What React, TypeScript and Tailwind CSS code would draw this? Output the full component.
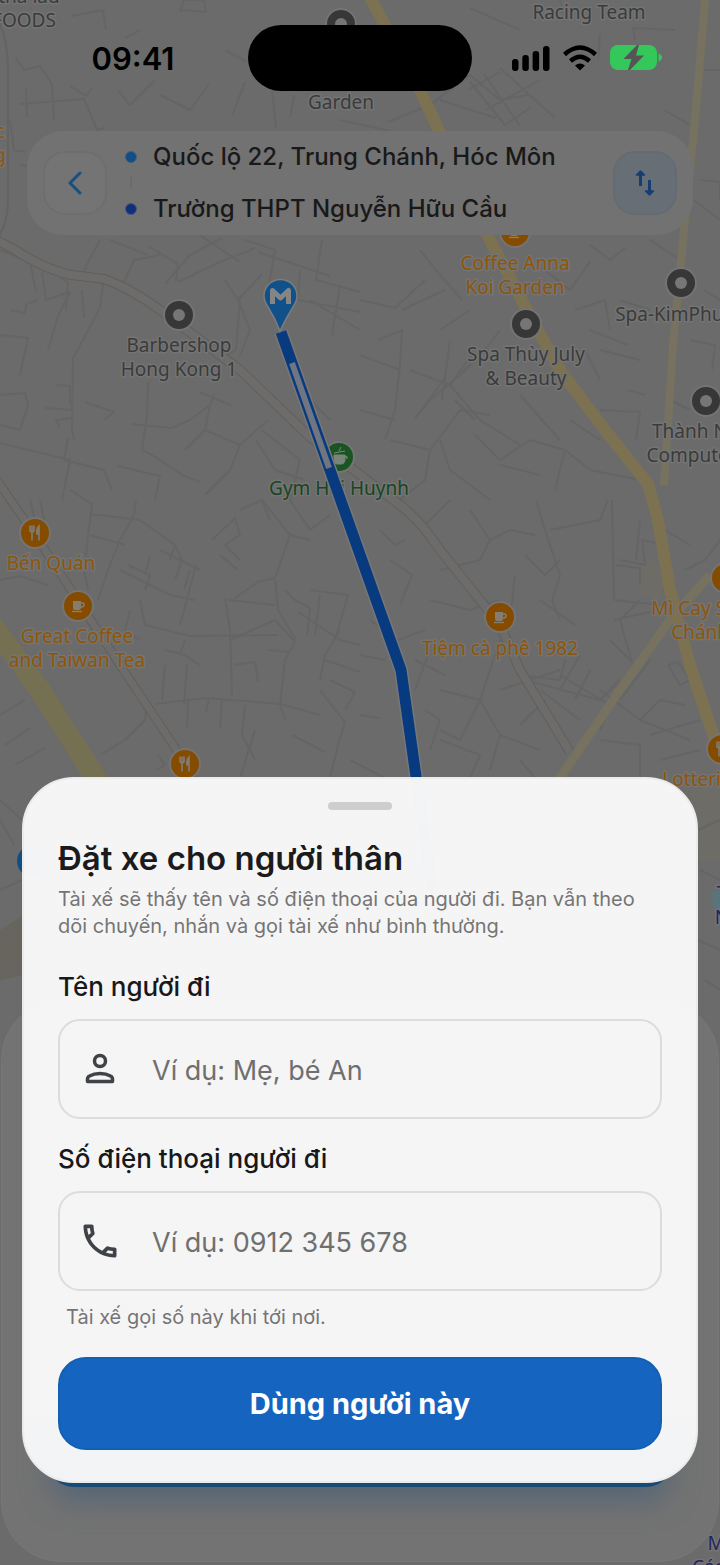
import { useId, useState } from "react";
import type { InputHTMLAttributes, ReactNode } from "react";
import { MdOutlineCall } from "react-icons/md";

const lanes = [
  // north-west
  "M16 58 L24 70 L40 66 L52 84 L54 120 M20 104 L84 99 L97 130 L104 128 M26 88 L27 118 M70 86 L86 96 L92 88",
  "M72 16 L103 10 L106 30 M125 38 L140 30 M180 12 L184 0 L204 0 L206 12 L180 10 M118 90 L130 105 L155 80",
  "M160 95 L190 110 L209 84 M225 50 L247 62 M232 116 L245 82 M272 90 L276 128 M290 118 L294 95 M340 120 L390 131",
  "M430 40 L415 52 M470 8 L520 30 M440 100 L496 118 M388 122 L430 105 L470 75 L500 100 L528 95",
  "M470 82 L505 125 L530 108 M484 74 L520 126 M500 68 L555 118 M486 110 L540 80 M468 90 L500 72",
  "M635 40 L633 28 L675 30 M664 110 L690 125 M704 70 L720 70 M560 0 L566 22 M600 34 L598 60",
  // west
  "M10 120 L14 150 L26 152 M20 165 L30 166 L31 190",
  "M0 250 L30 262 L36 292 M42 272 L46 300 L70 292 L58 316 L48 350 M82 290 L84 318 M100 240 L88 262 L84 272",
  "M104 275 L100 308 L84 338 L73 358 L72 430 L74 440 M10 310 L25 313 L26 304 L38 300 M60 278 L68 282 L66 310",
  "M110 240 L148 255 M120 290 L134 260 L160 255 M165 284 L190 255 L222 238 M148 246 L178 264 L176 282",
  "M178 282 L220 262 L255 248 M200 235 L222 250 L240 262 M225 280 L238 300 L262 274 M245 240 L275 250 L268 290",
  "M258 252 L330 276 M322 240 L316 280 L360 292 M300 270 L298 300 L360 312 M340 285 L332 335 M310 300 L360 330",
  "M240 300 L236 350 L218 360 M238 300 L250 330 L240 356 M0 335 L28 338 L20 375 M0 395 L25 393 L28 405 L20 430 L0 425",
  "M56 385 L70 386 L70 405 M45 408 L72 410 M60 428 L56 420 L72 418 M85 402 L114 412 L104 420",
  "M148 382 L147 415 L142 450 L152 455 M132 424 L172 428 L190 420 L210 405 L214 394 M200 392 L232 406",
  "M0 443 L70 460 L62 500 M68 438 L64 460 L104 470 L112 490 M152 455 L184 476 L200 482",
  "M210 405 L205 430 L185 450 M205 430 L240 445 L268 420 M240 445 L230 470 L205 495 M118 466 L160 476 L155 500",
  "M256 440 L275 470 L305 480 M310 400 L330 420 M290 425 L318 440 M262 430 L300 460 L290 500",
  "M40 500 L48 540 M30 500 L35 520 M70 490 L92 504 L90 520 L84 570 L88 590",
  "M90 514 L140 520 L175 545 L170 560 M90 535 L125 545 M136 500 L134 515 L120 540 L108 570 L98 600",
  "M120 570 L170 595 L195 600 M128 565 L150 575 L145 590 M160 550 L200 570 M150 556 L145 575 M175 545 L182 560 L175 580",
  "M212 540 L235 518 L240 535 L225 545 L240 560 M220 555 L238 570 M240 510 L262 500 L270 520 M290 500 L310 530 L330 515",
  "M235 598 L258 582 L275 578 L290 535 L310 540 M262 500 L290 535 M228 600 L275 605 M184 590 L190 570",
  "M196 565 L188 595 L180 625 M225 598 L230 630 L232 695 M140 600 L145 625 L190 636 L278 635 M130 610 L125 630 L140 640",
  "M165 650 L185 655 L200 665 M180 655 L185 640 M165 665 L162 700 M187 665 L184 705 M234 665 L255 662 L258 682",
  "M230 640 L275 620 L295 642 L285 660 L280 705 M268 650 L290 652 M275 580 L278 610 L296 640",
  "M285 590 L295 600 L310 608 L307 635 M310 590 L348 595 L335 640 M320 595 L315 635 M298 612 L340 640 L360 645",
  "M340 630 L325 655 L320 680 M325 660 L360 672 M330 680 L355 692 L345 710 M155 704 L205 698 L280 704 L320 715",
  "M188 700 L187 728 M209 698 L206 712 M222 700 L220 728 M245 705 L242 735 L255 760 M280 704 L285 720",
  "M320 690 L345 722 L338 745 L330 778 M292 735 L325 752 M255 730 L240 778 M100 755 L125 740 L145 720 L148 700",
  "M0 715 L25 700 M5 745 L30 728 M15 765 L45 748 M158 755 L165 765 L156 770 M0 580 L20 576 L48 585",
  // centre and east
  "M360 300 L395 308 L425 280 M360 355 L400 370 M378 340 L402 330 L400 365 L395 410 L385 440",
  "M402 310 L445 290 M420 250 L440 275 L462 300 M440 330 L470 310 M450 340 L442 400 M410 370 L450 385 L475 350",
  "M500 330 L485 350 L460 375 L430 400 L415 418 M420 412 L445 378 M360 410 L395 420 M455 400 L475 420 M520 395 L560 440",
  "M390 440 L430 450 L460 410 L490 415 M450 385 L480 420 L520 445 M475 435 L500 460 L530 440 M440 440 L450 470 L490 500",
  "M530 440 L565 450 L555 490 M430 450 L425 480 L400 500 M500 465 L540 475 M565 450 L590 470 L640 480 M570 420 L600 440",
  "M545 270 L570 290 L590 262 M575 310 L605 300 L610 330 M590 330 L628 345 M600 350 L640 360 M620 300 L650 310",
  "M650 240 L680 260 M585 350 L600 380 M628 390 L645 395 M590 245 L610 260 L625 248 M690 340 L715 345 L712 370",
  "M700 180 L720 182 L720 200 M694 200 L720 220 M704 290 L720 300 M670 400 L690 410 M600 410 L640 412 L636 440",
  "M536 500 L545 530 L560 575 L552 600 L560 620 M550 530 L600 520 L608 500 M612 500 L614 600 M525 555 L545 575 L560 560",
  "M470 510 L490 540 L510 530 L535 535 M490 540 L480 560 L440 570 M380 530 L395 545 L405 540 M420 530 L440 510 L450 500",
  "M390 560 L412 575 L400 605 M370 620 L398 640 L425 630 M430 600 L470 610 L500 600 M515 575 L510 620 M540 600 L575 625",
  "M614 600 L660 605 M614 620 L650 612 M620 560 L645 565 L642 540 L665 545 M610 640 L632 662 L620 620 L640 600",
  "M640 520 L636 560 M615 565 L640 568 L640 585 M665 530 L690 545 M685 570 L705 560 L720 540",
  "M520 675 L560 680 L565 660 M525 680 L600 700 L620 680 M540 690 L580 720 M560 675 L610 705 L600 730 M500 690 L560 670",
  "M580 655 L560 690 M590 670 L575 700 M600 690 L640 720 L690 740 M620 700 L650 660 M640 720 L660 700 L685 705",
  "M668 665 L680 685 L690 680 L678 662 L668 665 M650 735 L700 720 M600 740 L640 745 L640 778 M660 760 L700 750",
  "M440 690 L480 700 L460 740 L440 730 M415 660 L445 675 M430 650 L415 690 M500 640 L480 700 L500 735 L540 750",
  "M425 710 L440 720 L430 750 M500 735 L490 770 M520 760 L535 778 M440 740 L480 755 L470 778 M545 700 L520 725",
  "M360 655 L385 660 M360 715 L380 718 M350 760 L385 778",
  // sheet margins
  "M0 800 L22 820 M0 890 L22 880 M0 940 L22 925 M5 960 L22 965 M698 830 L720 820 M700 870 L720 880 M698 940 L720 950 M705 980 L720 990 M0 820 L14 845",
];

type Label = { x: number; y: number; lines: string[]; tone: "gray" | "orange" | "green" | "navy" };

const labels: Label[] = [
  { x: 29, y: 3, lines: ["thả lẩu"], tone: "gray" },
  { x: 24, y: 27, lines: ["FOODS"], tone: "gray" },
  { x: 589, y: 19, lines: ["Racing Team"], tone: "gray" },
  { x: 341, y: 109, lines: ["Garden"], tone: "gray" },
  { x: 0, y: 138, lines: ["c", "g"], tone: "orange" },
  { x: 515, y: 270, lines: ["Coffee Anna", "Koi Garden"], tone: "orange" },
  { x: 179, y: 352, lines: ["Barbershop", "Hong Kong 1"], tone: "gray" },
  { x: 526, y: 361, lines: ["Spa Thùy July", "& Beauty"], tone: "gray" },
  { x: 681, y: 321, lines: ["Spa-KimPhung"], tone: "gray" },
  { x: 707, y: 438, lines: ["Thành Nhân", "Computer Sài"], tone: "gray" },
  { x: 339, y: 495, lines: ["Gym Hải Huynh"], tone: "green" },
  { x: 51, y: 570, lines: ["Bến Quán"], tone: "orange" },
  { x: 77, y: 643, lines: ["Great Coffee", "and Taiwan Tea"], tone: "orange" },
  { x: 500, y: 655, lines: ["Tiệm cà phê 1982"], tone: "orange" },
  { x: 708, y: 615, lines: ["Mì Cay Seoul", "Chánh 1"], tone: "orange" },
  { x: 697, y: 786, lines: ["Lotteria"], tone: "orange" },
  { x: 722, y: 900, lines: ["T", "N"], tone: "navy" },
  { x: 716, y: 1550, lines: ["M", "Các P"], tone: "navy" },
];

const toneFill = {
  gray: "fill-[#3b3b3b]",
  orange: "fill-[#8d560b]",
  green: "fill-[#184522]",
  navy: "fill-[#25255e]",
};

const ringPins = [
  [341, 24],
  [179, 315],
  [526, 324],
  [681, 283],
  [706, 401],
];

const foodPins: { x: number; y: number; kind: "fork" | "cup" }[] = [
  { x: 515, y: 232, kind: "cup" },
  { x: 35, y: 533, kind: "fork" },
  { x: 78, y: 606, kind: "cup" },
  { x: 500, y: 617, kind: "cup" },
  { x: 726, y: 578, kind: "cup" },
  { x: 185, y: 764, kind: "fork" },
  { x: 722, y: 749, kind: "fork" },
];

function MapCanvas() {
  return (
    <svg
      aria-hidden="true"
      className="absolute inset-0 size-full"
      viewBox="0 0 720 1565"
      preserveAspectRatio="xMidYMin slice"
      fill="none"
    >
      <rect width="720" height="1565" fill="#6b6b6b" />
      <path d="M640 565 L655 560 L665 580 L660 600 L640 595Z M660 780 L720 775 L720 860 L698 860Z" fill="#6d6c66" />
      <path d="M0 930 L24 915 L24 975 L0 980Z" fill="#67655e" />
      <path d="M711 893 l9 -4 v20 l-6 0z" fill="#58747c" />
      <g stroke="#656565" strokeWidth="2" strokeLinejoin="round">
        {lanes.map((d) => (
          <path key={d} d={d} />
        ))}
      </g>

      <g strokeLinejoin="round">
        <path d="M-20 232 L12 248 Q45 270 72 275 L104 279 Q130 288 160 310 L240 370 L310 437 L400 505 Q420 520 440 550 L500 625 L520 670 L570 752" stroke="#605f5c" strokeWidth="10" />
        <path d="M-20 232 L12 248 Q45 270 72 275 L104 279 Q130 288 160 310 L240 370 L310 437 L400 505 Q420 520 440 550 L500 625 L520 670 L570 752" stroke="#6d6c6a" strokeWidth="8" />
        <path d="M-10 470 L45 550 L120 665 L180 755 L200 790" stroke="#605f5c" strokeWidth="9" />
        <path d="M-10 470 L45 550 L120 665 L180 755 L200 790" stroke="#6d6c6a" strokeWidth="7" />
        <path d="M-2 20 Q8 40 8 70 V200 Q8 225 -4 240" stroke="#636361" strokeWidth="2" />
      </g>

      <g stroke="#76725f" strokeLinejoin="round">
        <path d="M706 -10 L700 60 L694 130 L683 240 L673 345 L664 485" strokeWidth="8" />
        <path d="M710 575 L670 620 L620 690 L555 785" strokeWidth="9" />
      </g>
      <path
        d="M366 -10 L420 90 L490 240 L535 325 L560 370 L605 430 L648 484 L658 520 L670 590 L690 665 L715 740"
        stroke="#7c7151"
        strokeWidth="12"
        strokeLinejoin="round"
      />
      <path d="M-15 615 L40 690 L100 785" stroke="#757052" strokeWidth="21" />

      <g stroke="#747474" strokeWidth="2">
        {ringPins.map(([x, y]) => (
          <g key={`${x}-${y}`}>
            <circle cx={x} cy={y} r="15" fill="#373737" />
            <circle cx={x} cy={y} r="6" fill="#767676" stroke="none" />
          </g>
        ))}
        {foodPins.map(({ x, y, kind }) => (
          <g key={`${x}-${y}`} transform={`translate(${x} ${y})`}>
            <circle r="15" fill="#854c00" />
            {kind === "fork" ? (
              <g stroke="#817c74" strokeWidth="1.6" strokeLinecap="round">
                <path d="M-5 -7 V-3 Q-5 -1 -3 -1 Q-1 -1 -1 -3 V-7 M-3 -7 V7" />
                <path d="M4 7 V-7 Q1 -4 2 1 H4" fill="#817c74" />
              </g>
            ) : (
              <g stroke="none">
                <path d="M-5 -5 H3 V2 Q3 4 1 4 H-3 Q-5 4 -5 2Z" fill="#857d72" />
                <path d="M3 -3 H5 Q6 -3 6 -1 Q6 1 3 1" stroke="#857d72" strokeWidth="1.6" />
                <path d="M-6 5.5 H4" stroke="#857d72" strokeWidth="1.4" />
              </g>
            )}
          </g>
        ))}
        <circle cx="339" cy="457" r="15" fill="#1b5423" />
        <path d="M334 455 h11 v4 q0 5 -4 5 h-4 q-3 0 -3 -5z M334 453 l11 -2 M339 451 l2 -4 M345 456 q3 0 2 3" fill="#788579" stroke="#788579" strokeWidth="1" />
      </g>

      <g fontFamily="'Noto Sans', sans-serif" fontSize="19" textAnchor="middle" stroke="#747474" strokeWidth="3" strokeLinejoin="round">
        {labels.map(({ x, y, lines, tone }) => (
          <text key={lines[0] + x} x={x} y={y} className={toneFill[tone]} paintOrder="stroke">
            {lines.map((line, i) => (
              <tspan key={line} x={x} dy={i === 0 ? 0 : 24}>
                {line}
              </tspan>
            ))}
          </text>
        ))}
      </g>

      <circle cx="33" cy="861" r="16" fill="#124f84" />
      <path d="M281 332 L401 670 L432 890" stroke="#777" strokeWidth="14" />
      <path d="M281 332 L401 670 L432 890" stroke="#083a80" strokeWidth="11" />
      <path d="M292 363 L329 468" stroke="#707582" strokeWidth="6" />
      <path
        d="M280 331 Q275 318 268 307 Q264 301 264 296 A16.500 16.500 0 0 1 297 296 Q297 301 293 307 Q286 318 280 331Z"
        fill="#11518a"
        stroke="#7c7c7c"
        strokeWidth="1.500"
      />
      <path d="M272.500 304 V290.500 L280.500 298 L288.500 290.500 V304" stroke="#858585" strokeWidth="5" strokeLinejoin="round" />
    </svg>
  );
}

function StatusBar() {
  return (
    <header className="grid grid-cols-[1fr_224px_1fr] items-center px-[18px] pt-[25px] text-black">
      <time className="justify-self-center text-[31px] leading-none font-semibold">09:41</time>
      <div className="h-[66px] rounded-full bg-black" />
      <div className="flex items-center gap-[13px] justify-self-center">
        <svg width="38" height="26" viewBox="0 0 38 26" aria-label="Sóng di động">
          <rect x="0" y="14" width="6.500" height="12" rx="3" />
          <rect x="10.300" y="10" width="6.500" height="16" rx="3" />
          <rect x="20.600" y="6" width="6.500" height="20" rx="3" />
          <rect x="31" y="1" width="6.500" height="25" rx="3" />
        </svg>
        <svg width="34" height="26" viewBox="0 0 34 26" fill="none" stroke="#000" strokeWidth="4.400" aria-label="Wi-Fi">
          <path d="M1.500 9.500 Q17 -4.500 32.500 9.500" />
          <path d="M7.500 16 Q17 7.500 26.500 16" />
          <path d="M12 20.500 Q17 16.500 22 20.500 L17 25.500Z" fill="#000" stroke="none" />
        </svg>
        <svg width="53" height="28" viewBox="0 0 53 28" aria-label="Đang sạc">
          <rect x="0" y="1" width="47" height="25" rx="8" fill="#34c759" />
          <path d="M48.500 9.500 Q52 11 52 13.500 Q52 16 48.500 17.500Z" fill="#34c759" />
          <path d="M27 1 L13.500 15 H21.500 L18 26 H20 L34 11.500 H26 L29 1Z" fill="#555" />
        </svg>
      </div>
    </header>
  );
}

function RouteCard() {
  return (
    <section className="mx-[27px] mt-10 flex items-center rounded-[36px] bg-[#727272] px-4">
      <button
        type="button"
        aria-label="Quay lại"
        className="flex size-16 shrink-0 items-center justify-center rounded-[22px] border-2 border-[#6d6e6f] bg-[#747474]"
      >
        <svg width="16" height="24" viewBox="0 0 16 24" fill="none" stroke="#174f80" strokeWidth="3" strokeLinecap="round" strokeLinejoin="round">
          <path d="M13 2 L3 12 L13 22" />
        </svg>
      </button>
      <div className="ml-[18px] flex flex-col items-center gap-[14px]">
        <span className="size-3 rounded-full border border-[#44607a] bg-[#114d86]" />
        <span className="h-3 w-0.5 bg-[#696b70]" />
        <span className="size-3 rounded-full border border-[#46567a] bg-[#102f78]" />
      </div>
      <ul className="ml-4 min-w-0 grow text-[24px] leading-[52px] font-medium text-[#191919]">
        <li className="truncate">Quốc lộ 22, Trung Chánh, Hóc Môn</li>
        <li className="truncate">Trường THPT Nguyễn Hữu Cầu</li>
      </ul>
      <button
        type="button"
        aria-label="Đổi chiều"
        className="flex size-16 shrink-0 items-center justify-center rounded-[22px] border-2 border-[#636b73] bg-[#686e75]"
      >
        <svg width="20" height="28" viewBox="0 0 20 28" fill="none" stroke="#153f70" strokeWidth="3">
          <path d="M5.500 17 V4" />
          <path d="M14.500 11 V24" />
          <path d="M1.500 6 L5.500 2 L9.500 6Z M10.500 22 L14.500 26 L18.500 22Z" fill="#153f70" strokeWidth="1.500" strokeLinejoin="round" />
        </svg>
      </button>
    </section>
  );
}

function PersonIcon() {
  return (
    <svg
      className="size-11 shrink-0"
      viewBox="0 0 44 44"
      fill="none"
      stroke="currentColor"
      strokeWidth="3.500"
      strokeLinejoin="round"
    >
      <circle cx="22" cy="14" r="5.500" />
      <path d="M9.500 34.500 V32 Q9.500 30 11.500 29 Q16 26.500 22 26.500 Q28 26.500 32.500 29 Q34.500 30 34.500 32 V34.500Z" />
    </svg>
  );
}

type FieldProps = { label: string; icon: ReactNode } & InputHTMLAttributes<HTMLInputElement>;

function Field({ label, icon, ...input }: FieldProps) {
  const id = useId();
  return (
    <div>
      <label htmlFor={id} className="block text-[26px] leading-8 font-medium text-[#18181a]">
        {label}
      </label>
      <div className="mt-4 flex h-[100px] items-center rounded-[22px] border-2 border-[#dcdcdc] px-[18px] text-[#3f4247]">
        {icon}
        <input
          id={id}
          className="ml-[30px] w-full min-w-0 bg-transparent pt-1 text-[27px] text-[#18181a] outline-none placeholder:text-[#6f6f6f]"
          {...input}
        />
      </div>
    </div>
  );
}

export default function App() {
  const [name, setName] = useState("");
  const [phone, setPhone] = useState("");

  return (
    <main className="relative flex min-h-screen flex-col overflow-hidden font-['Inter','Noto_Sans',sans-serif]">
      <MapCanvas />
      <div className="absolute inset-x-px bottom-[3px] h-[562px] rounded-[60px] border border-[#777777] bg-[#737373]" />

      <div className="relative flex grow flex-col">
        <StatusBar />
        <RouteCard />

        <form
          onSubmit={(event) => event.preventDefault()}
          className="mx-[22px] mt-auto mb-[82px] flex flex-col rounded-[52px] border-2 border-[#ebebeb] bg-linear-to-b from-[#f9f9f9]/97 from-90% to-[#f5f7f9]/97 px-[34px] pt-[23px] pb-[31px] shadow-[0_30px_0_-26px_#184a76,0_46px_30px_-30px_#526476]"
        >
          <div className="h-2 w-16 self-center rounded-full bg-[#cecece]" />
          <h1 className="mt-7 text-[33px] leading-10 font-semibold text-[#1b1b1d]">Đặt xe cho người thân</h1>
          <p className="mt-2 text-[20px] leading-[27px] text-[#757575]">
            Tài xế sẽ thấy tên và số điện thoại của người đi. Bạn vẫn theo dõi chuyến, nhắn và gọi tài xế như bình
            thường.
          </p>

          <div className="mt-[31px] flex flex-col gap-6">
            <Field
              label="Tên người đi"
              icon={<PersonIcon />}
              placeholder="Ví dụ: Mẹ, bé An"
              value={name}
              onChange={(event) => setName(event.target.value)}
            />
            <Field
              label="Số điện thoại người đi"
              icon={<MdOutlineCall className="size-11 shrink-0" />}
              type="tel"
              placeholder="Ví dụ: 0912 345 678"
              value={phone}
              onChange={(event) => setPhone(event.target.value)}
            />
          </div>
          <p className="mt-3 ml-2 text-[20px] leading-7 text-[#757575]">Tài xế gọi số này khi tới nơi.</p>

          <button
            type="submit"
            className="mt-[26px] h-[93px] rounded-[28px] border-2 border-[#145fb4] bg-[#1565c0] text-[29px] font-bold text-white"
          >
            Dùng người này
          </button>
        </form>
      </div>
    </main>
  );
}
